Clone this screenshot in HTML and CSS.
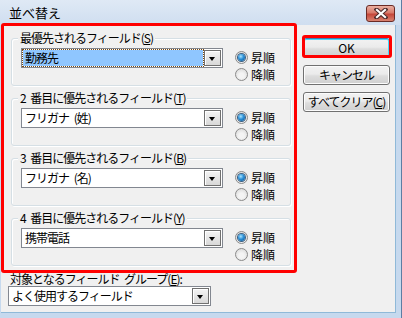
FILE: index.html
```html
<!DOCTYPE html>
<html lang="ja">
  <head>
    <meta charset="UTF-8" />
    <title>並べ替え</title>
    <link rel="stylesheet" href="styles.css">
  </head>
  <body>
    <div class="window">
      <div class="titlebar">
        <span class="title">並べ替え</span>
        <span class="close">
          <svg width="14" height="11" viewBox="0 0 14 11">
            <path d="M2.5 1.5 L11.5 9.5 M11.5 1.5 L2.5 9.5" stroke="#4a2a2a" stroke-width="4.2" stroke-linecap="square" />
            <path d="M3 2 L11 9 M11 2 L3 9" stroke="#ffffff" stroke-width="2.2" stroke-linecap="square" />
          </svg>
        </span>
      </div>

      <div class="client">
        <div class="main">
          <!-- sort fields -->
          <div class="group">
            <div class="group-title">最優先されるフィールド(<u>S</u>)</div>
            <div class="group-row">
              <div class="combo focused">
                <span class="combo-text">勤務先</span>
                <span class="combo-btn"></span>
              </div>
              <div class="order">
                <div class="opt"><span class="radio checked"></span>昇順</div>
                <div class="opt"><span class="radio"></span>降順</div>
              </div>
            </div>
          </div>

          <div class="group">
            <div class="group-title">2 番目に優先されるフィールド(<u>T</u>)</div>
            <div class="group-row">
              <div class="combo">
                <span class="combo-text">フリガナ (姓)</span>
                <span class="combo-btn"></span>
              </div>
              <div class="order">
                <div class="opt"><span class="radio checked"></span>昇順</div>
                <div class="opt"><span class="radio"></span>降順</div>
              </div>
            </div>
          </div>

          <div class="group">
            <div class="group-title">3 番目に優先されるフィールド(<u>B</u>)</div>
            <div class="group-row">
              <div class="combo">
                <span class="combo-text">フリガナ (名)</span>
                <span class="combo-btn"></span>
              </div>
              <div class="order">
                <div class="opt"><span class="radio checked"></span>昇順</div>
                <div class="opt"><span class="radio"></span>降順</div>
              </div>
            </div>
          </div>

          <div class="group">
            <div class="group-title">4 番目に優先されるフィールド(<u>Y</u>)</div>
            <div class="group-row">
              <div class="combo">
                <span class="combo-text">携帯電話</span>
                <span class="combo-btn"></span>
              </div>
              <div class="order">
                <div class="opt"><span class="radio checked"></span>昇順</div>
                <div class="opt"><span class="radio"></span>降順</div>
              </div>
            </div>
          </div>

          <!-- field group -->
          <div class="fg-label">対象となるフィールド グループ(<u>E</u>):</div>
          <div class="combo combo-wide">
            <span class="combo-text">よく使用するフィールド</span>
            <span class="combo-btn"></span>
          </div>
        </div>

        <div class="buttons">
          <div class="btn default">OK</div>
          <div class="btn">キャンセル</div>
          <div class="btn">すべてクリア(<u>C</u>)</div>
        </div>
      </div>

      <!-- red highlight marks -->
      <div class="mark mark-groups"></div>
      <div class="mark mark-ok"></div>
    </div>
  </body>
</html>
```

FILE: styles.css
```css
/* Page */
body {
  margin: 0;
  font-family: "Noto Sans CJK JP", "Noto Sans", sans-serif;
  font-size: 12px;
  letter-spacing: -1px;
  word-spacing: 3px;
  color: #000;
  background: #ffffff;
}

/* Window frame */
.window {
  position: relative;
  width: 402px;
  height: 318px;
  box-sizing: border-box;
  background: #c6d9ee;
  border-right: 1px solid #5d7da3;
  display: flex;
  flex-direction: column;
}

/* Title bar */
.titlebar {
  height: 25px;
  display: flex;
  align-items: flex-start;
  justify-content: space-between;
  padding: 0 6px 0 9px;
  background: linear-gradient(#dfe9f5, #cfdef0);
}
.title {
  line-height: 26px;
  font-size: 13px;
  letter-spacing: 0;
  color: #000;
}
.close {
  margin-top: 5px;
  width: 29px;
  height: 17px;
  box-sizing: border-box;
  border: 1px solid #6a2b25;
  border-radius: 3px;
  background: linear-gradient(#eab0a2 0%, #d97a6a 45%, #c5473a 55%, #d9826f 100%);
  display: flex;
  align-items: center;
  justify-content: center;
}

/* Client area */
.client {
  flex: 1;
  margin: 0 5px 5px 1px;
  background: #f0f0f0;
  border-right: 1px solid #8fb9d8;
  border-bottom: 1px solid #8fb9d8;
  display: flex;
  padding: 12px 0 0 7px;
}
.main {
  width: 284px;
}

/* Group boxes */
.group {
  margin: 1px 0 12px 3px;
  width: 280px;
  height: 48px;
  box-sizing: border-box;
  border: 1px solid #d5dfe5;
  border-radius: 3px;
  box-shadow: inset 1px 1px #fff, 1px 1px #fff;
}
.group + .group {
  margin-top: 0;
}
.group-title {
  display: table;
  margin: -8px 0 0 6px;
  padding: 0 2px;
  height: 14px;
  line-height: 14px;
  background: #f0f0f0;
}
.group-row {
  display: flex;
  padding-left: 9px;
  margin-top: 3px;
}

/* Combo boxes */
.combo {
  width: 202px;
  height: 20px;
  box-sizing: border-box;
  border: 1px solid #828790;
  background: #fff;
  display: flex;
  align-items: center;
  padding: 1px;
}
.combo-text {
  flex: 1;
  height: 16px;
  line-height: 16px;
  padding-left: 2px;
  margin-right: 1px;
}
.combo.focused .combo-text {
  background: #8fc6ff;
  outline: 1px dotted #7a4b12;
}
.combo-btn {
  position: relative;
  width: 17px;
  height: 16px;
  box-sizing: border-box;
  border: 1px solid #707070;
  background: linear-gradient(#f4f4f4, #d8d8d8);
  box-shadow: inset 1px 1px #fff;
}
.combo-btn::after {
  content: "";
  position: absolute;
  left: 4px;
  top: 6px;
  border-left: 3.5px solid transparent;
  border-right: 3.5px solid transparent;
  border-top: 4px solid #000;
}
.combo-wide {
  width: 203px;
}

/* Sort order radios */
.order {
  margin: 1px 0 0 12px;
}
.opt {
  display: flex;
  align-items: center;
  gap: 3px;
  height: 17px;
  letter-spacing: 0;
}
.radio {
  width: 13px;
  height: 13px;
  box-sizing: border-box;
  border-radius: 50%;
  border: 1px solid #8a8a8a;
  background: radial-gradient(circle at 50% 60%, #f4f4f4 30%, #d2d2d2 100%);
  display: flex;
  align-items: center;
  justify-content: center;
}
.radio.checked::after {
  content: "";
  width: 7px;
  height: 7px;
  border-radius: 50%;
  background: radial-gradient(circle at 40% 35%, #a8e4ff 0%, #2b8fd6 45%, #0b4f8c 100%);
  box-shadow: 0 0 0 1px #3a5e80;
}

/* Field group selector */
.fg-label {
  margin: -6px 0 0 2px;
  height: 14px;
  line-height: 14px;
}

/* Buttons */
.buttons {
  margin: 0 0 0 11px;
  padding-top: 1px;
  display: flex;
  flex-direction: column;
  gap: 7px;
}
.btn {
  width: 87px;
  height: 20px;
  box-sizing: border-box;
  border: 1px solid #707070;
  border-radius: 3px;
  background: linear-gradient(#f2f2f2 0%, #ebebeb 45%, #dddddd 55%, #cfcfcf 100%);
  box-shadow: inset 0 0 0 1px #fcfcfc;
  text-align: center;
  line-height: 18px;
  white-space: nowrap;
}
.btn.default {
  border-color: #3c7fb1;
  box-shadow: inset 0 0 0 1px #48d8fb;
  letter-spacing: 0;
}

/* Red annotation marks */
.mark {
  position: absolute;
  box-sizing: border-box;
  border: 3px solid #ff0000;
  border-radius: 3px;
}
.mark-groups {
  left: 1px;
  top: 23px;
  width: 296px;
  height: 250px;
}
.mark-ok {
  left: 302px;
  top: 35px;
  width: 90px;
  height: 23px;
}
```
